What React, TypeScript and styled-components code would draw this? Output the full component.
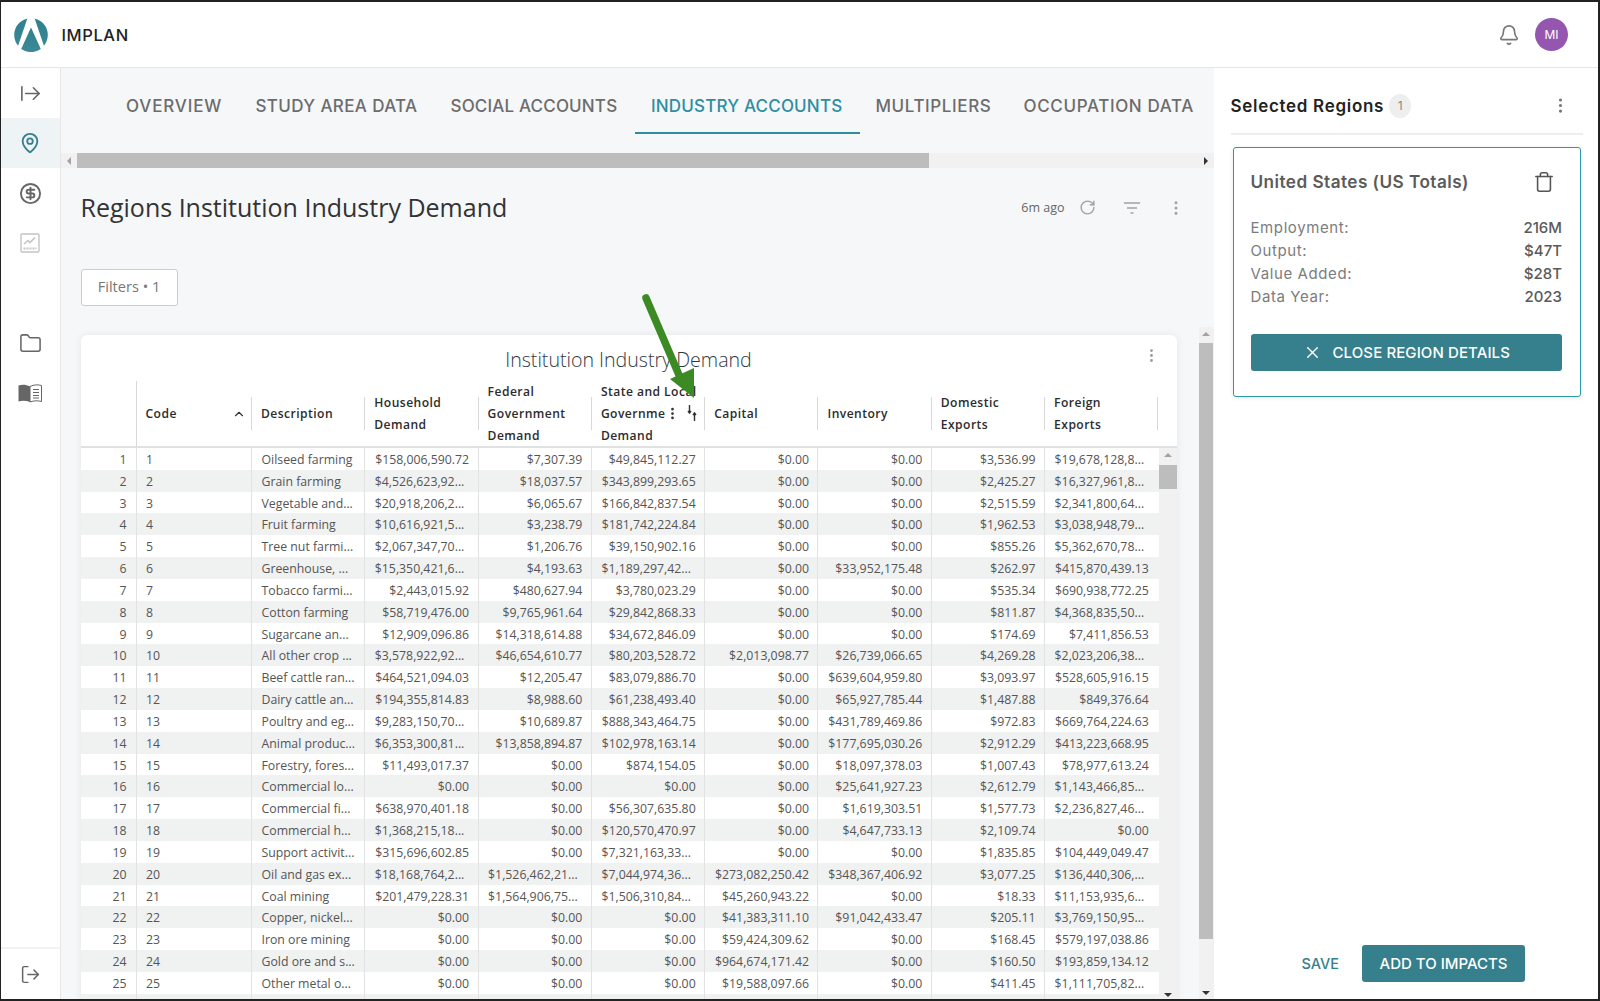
import React from "react";
import styled, { createGlobalStyle } from "styled-components";
import { Bell, EllipsisVertical, MapPin, CircleDollarSign, Folder, RotateCw, Trash, X, ChevronUp, ArrowRightFromLine, LogOut } from "lucide-react";

const heading = `Inter, "Liberation Sans", sans-serif`;
const body = `"Open Sans", "Liberation Sans", sans-serif`;
const teal = "#367f8c";

const GlobalStyle = createGlobalStyle`
  html, body { margin: 0; padding: 0; background: #fff; }
  * { box-sizing: border-box; }
`;

const Frame = styled.div`
  position: relative;
  width: 1600px;
  height: 1001px;
  overflow: hidden;
  border: solid #222;
  border-width: 2px 2px 2px 1.5px;
  display: grid;
  grid-template-rows: 66px 1fr;
  font-family: ${body};
`;

const TopBar = styled.header`
  display: flex;
  align-items: center;
  padding: 0 30px 0 12.5px;
  background: #fff;
  border-bottom: 1px solid #e6e6e6;
`;

const Brand = styled.div`
  font: 500 16.5px ${heading};
  letter-spacing: 0.6px;
  color: #222;
  margin-left: 14px;
  flex: 1;
`;

const Avatar = styled.div`
  width: 33px;
  height: 33px;
  border-radius: 50%;
  background: #9556b0;
  color: #fff;
  font: 400 12px ${heading};
  display: flex;
  align-items: center;
  justify-content: center;
  margin-left: 15px;
`;

const Body = styled.div`
  display: grid;
  grid-template-columns: 59.5px 1153px 1fr;
  min-height: 0;
`;

const SideBar = styled.nav`
  display: flex;
  flex-direction: column;
  background: #fff;
  border-right: 1px solid #e6e6e6;
`;

const SideItem = styled.div<{ $active?: boolean; $muted?: boolean }>`
  height: 50px;
  display: flex;
  align-items: center;
  justify-content: center;
  background: ${(p) => (p.$active ? "#eef3f6" : "transparent")};
  color: ${(p) => (p.$active ? teal : p.$muted ? "#c4c4c4" : "#666")};
`;

const SideGap = styled.div<{ $h?: number }>`
  ${(p) => (p.$h ? `height: ${p.$h}px;` : "flex: 1;")}
`;

const SideFoot = styled(SideItem)`
  height: 52px;
  border-top: 2px solid #f2f2f2;
`;

const Main = styled.main`
  display: flex;
  flex-direction: column;
  background: #f6f7f9;
  min-height: 0;
  min-width: 0;
`;

const Tabs = styled.div`
  height: 85px;
  display: flex;
  padding-left: 49.5px;
`;

const Tab = styled.div<{ $active?: boolean; $w: number; $ls: number }>`
  width: ${(p) => p.$w}px;
  flex: none;
  height: 66px;
  padding: 12px 0 0 16px;
  display: flex;
  align-items: center;
  white-space: nowrap;
  font: 500 17px ${heading};
  letter-spacing: ${(p) => p.$ls}px;
  color: ${(p) => (p.$active ? "#2d8ea0" : "#6c6c6c")};
  border-bottom: 2px solid ${(p) => (p.$active ? "#2d8ea0" : "transparent")};
`;

const HScroll = styled.div`
  flex: none;
  height: 15px;
  display: flex;
  align-items: center;
  background: #f1f1f1;
  padding: 0 6px;
`;

const HThumb = styled.div`
  height: 15px;
  width: 852px;
  margin-left: 6px;
  background: #bdbdbd;
  flex: none;
`;

const Arrow = styled.i<{ $dir: "left" | "right" | "up" | "down"; $dark?: boolean }>`
  display: block;
  width: 0;
  height: 0;
  flex: none;
  border: 4px solid transparent;
  ${(p) => {
    const c = p.$dark ? "#333" : "#a3a3a3";
    if (p.$dir === "left") return `border-right-color: ${c}; border-left-width: 0;`;
    if (p.$dir === "right") return `border-left-color: ${c}; border-right-width: 0; margin-left: auto;`;
    if (p.$dir === "up") return `border-bottom-color: ${c}; border-top-width: 0;`;
    return `border-top-color: ${c}; border-bottom-width: 0; margin-top: auto;`;
  }}
`;

const ContentRow = styled.div`
  flex: 1;
  display: grid;
  grid-template-columns: 1fr 15px;
  min-height: 0;
`;

const Content = styled.div`
  padding: 0 13px 0 20px;
  min-width: 0;
  overflow: hidden;
`;

const TitleRow = styled.div`
  height: 79px;
  display: flex;
  align-items: center;
`;

const PageTitle = styled.h1`
  flex: 1;
  margin: 0 0 1px;
  font: 400 25px ${body};
  color: #333;
`;

const Ago = styled.span`
  font-size: 12.5px;
  color: #666;
  margin-right: 13px;
`;

const ToolIcon = styled.span<{ $w: number }>`
  width: ${(p) => p.$w}px;
  display: flex;
  justify-content: center;
  color: #a2a2a2;
`;

const FilterButton = styled.button`
  display: block;
  width: 97px;
  height: 37px;
  margin-top: 22px;
  padding: 0 0 3px;
  background: #fff;
  border: 1px solid #ccc;
  border-radius: 3px;
  font: 400 14.6px ${body};
  color: #777;
`;

const Card = styled.section`
  margin-top: 29px;
  width: 1096px;
  background: #fff;
  border-radius: 6px 6px 0 0;
  box-shadow: 0 0 8px rgba(0, 0, 0, 0.07);
  display: flex;
  flex-direction: column;
`;

const CardHead = styled.div`
  position: relative;
  height: 46px;
  display: flex;
  justify-content: center;
  font: 300 19.6px ${body};
  color: #2f3a45;
  line-height: 50px;
`;

const CardDots = styled.span`
  position: absolute;
  right: 17px;
  top: 12px;
  color: #999;
  display: flex;
`;

const GridColumns = `55px 115.5px repeat(8, 113.3px)`;

const HeadRow = styled.div`
  display: grid;
  grid-template-columns: ${GridColumns};
  width: 1078px;
  height: 66px;
`;

const BottomRule = styled.div`
  height: 2px;
  margin-top: -1px;
  background: #dfe1e3;
`;

const HeadCell = styled.div<{ $tall?: boolean; $end?: boolean }>`
  position: relative;
  display: flex;
  align-items: center;
  padding-left: 10px;
  font: 600 12.1px/22px ${body};
  letter-spacing: 0.45px;
  color: #2c2c2c;
  &::before {
    content: "";
    position: absolute;
    left: 0;
    top: ${(p) => (p.$tall ? "0" : "16px")};
    bottom: ${(p) => (p.$tall ? "0" : "17px")};
    width: 1px;
    background: #d9d9d9;
  }
  ${(p) =>
    p.$end &&
    `&::after {
      content: "";
      position: absolute;
      right: -1px;
      top: 16px;
      bottom: 17px;
      width: 1px;
      background: #d9d9d9;
    }`}
`;

const SortMark = styled.span`
  position: absolute;
  right: 5px;
  top: 26px;
  color: #333;
  display: flex;
`;

const MenuMark = styled.span`
  position: absolute;
  top: 25px;
  left: 74px;
  color: #333;
  display: flex;
`;

const SwapMark = styled.svg`
  position: absolute;
  top: 24px;
  left: 96px;
`;

const TableBody = styled.div`
  display: grid;
  grid-template-columns: 1078px 18px;
`;

const Row = styled.div<{ $odd: boolean }>`
  display: grid;
  grid-template-columns: ${GridColumns};
  height: 21.83px;
  background: ${(p) => (p.$odd ? "#f0f1f1" : "#fff")};
`;

const Cell = styled.div<{ $align?: "left" | "right"; $index?: boolean }>`
  padding: 0 8.5px 0 9.5px;
  font-size: 12.3px;
  line-height: 23px;
  color: #555;
  white-space: nowrap;
  overflow: hidden;
  text-align: ${(p) => p.$align ?? "left"};
  border-left: ${(p) => (p.$index ? "0" : "1px solid #e2e2e2")};
  ${(p) => p.$index && "padding: 0 9px 0 0;"}
`;

const InnerScroll = styled.div`
  display: flex;
  flex-direction: column;
  align-items: center;
  background: #f1f1f1;
  padding: 5px 0 3px;
  height: 552px;
`;

const InnerThumb = styled.div`
  width: 100%;
  height: 24px;
  margin-top: 8px;
  background: #bdbdbd;
`;

const VTrack = styled.div`
  display: flex;
  flex-direction: column;
  align-items: center;
  background: #f1f1f1;
  margin-top: 159px;
  padding: 5px 0 4px;
`;

const VThumb = styled.div`
  width: 14px;
  height: 596px;
  margin-top: 7px;
  background: #bdbdbd;
`;

const Panel = styled.aside`
  display: flex;
  flex-direction: column;
  background: #fff;
  padding: 0 15px 0 17px;
  min-height: 0;
`;

const PanelHead = styled.div`
  height: 67px;
  display: flex;
  align-items: center;
  border-bottom: 2px solid #eee;
  padding: 10px 13px 0 0;
`;

const PanelTitle = styled.h2`
  margin: 0;
  font: 600 17px ${heading};
  color: #222;
  letter-spacing: 0.7px;
`;

const CountBadge = styled.span`
  width: 22px;
  height: 24px;
  border-radius: 50%;
  background: #eee;
  color: #888;
  font: 400 12px ${heading};
  display: flex;
  align-items: center;
  justify-content: center;
  margin: 0 auto 0 5px;
`;

const RegionCard = styled.div`
  margin: 12px 2px 0;
  height: 250px;
  border: 1.5px solid #2c98a8;
  border-radius: 3px;
  box-shadow: 0 1px 4px rgba(0, 0, 0, 0.1);
  padding: 0 18px 0 17px;
`;

const RegionHead = styled.div`
  height: 67px;
  display: flex;
  align-items: center;
  justify-content: space-between;
  padding: 0 7px 0 0;
  margin-bottom: 1px;
  font: 600 17.2px ${heading};
  letter-spacing: 0.45px;
  color: #5b5b5b;
`;

const Stat = styled.div`
  display: flex;
  justify-content: space-between;
  height: 23px;
  align-items: center;
  font: 400 15px ${heading};
  letter-spacing: 0.6px;
  color: #7c7c7c;
  & > b {
    font-weight: 500;
    letter-spacing: 0;
    color: #5a5a5a;
  }
`;

const CloseButton = styled.button`
  width: 100%;
  height: 37px;
  margin-top: 25.5px;
  display: flex;
  align-items: center;
  justify-content: center;
  gap: 11px;
  background: ${teal};
  border: 0;
  border-radius: 3px;
  color: #fff;
  font: 500 15px ${heading};
  letter-spacing: 0.1px;
`;

const PanelFoot = styled.div`
  margin-top: auto;
  margin-bottom: 17px;
  display: flex;
  align-items: center;
  justify-content: flex-end;
  padding-right: 58px;
`;

const SaveLink = styled.span`
  font: 500 14.5px ${heading};
  color: ${teal};
  margin-right: 23px;
`;

const AddButton = styled.button`
  width: 163px;
  height: 37px;
  background: ${teal};
  border: 0;
  border-radius: 3px;
  color: #fff;
  font: 500 15px ${heading};
`;

const Pointer = styled.svg`
  position: absolute;
  left: 0;
  top: 0;
  pointer-events: none;
`;

// trailing "..." means the grid clipped the value, those sit left aligned
const rows: string[][] = [
  ["1", "Oilseed farming", "$158,006,590.72", "$7,307.39", "$49,845,112.27", "$0.00", "$0.00", "$3,536.99", "$19,678,128,8..."],
  ["2", "Grain farming", "$4,526,623,92...", "$18,037.57", "$343,899,293.65", "$0.00", "$0.00", "$2,425.27", "$16,327,961,8..."],
  ["3", "Vegetable and...", "$20,918,206,2...", "$6,065.67", "$166,842,837.54", "$0.00", "$0.00", "$2,515.59", "$2,341,800,64..."],
  ["4", "Fruit farming", "$10,616,921,5...", "$3,238.79", "$181,742,224.84", "$0.00", "$0.00", "$1,962.53", "$3,038,948,79..."],
  ["5", "Tree nut farmi...", "$2,067,347,70...", "$1,206.76", "$39,150,902.16", "$0.00", "$0.00", "$855.26", "$5,362,670,78..."],
  ["6", "Greenhouse, ...", "$15,350,421,6...", "$4,193.63", "$1,189,297,42...", "$0.00", "$33,952,175.48", "$262.97", "$415,870,439.13"],
  ["7", "Tobacco farmi...", "$2,443,015.92", "$480,627.94", "$3,780,023.29", "$0.00", "$0.00", "$535.34", "$690,938,772.25"],
  ["8", "Cotton farming", "$58,719,476.00", "$9,765,961.64", "$29,842,868.33", "$0.00", "$0.00", "$811.87", "$4,368,835,50..."],
  ["9", "Sugarcane an...", "$12,909,096.86", "$14,318,614.88", "$34,672,846.09", "$0.00", "$0.00", "$174.69", "$7,411,856.53"],
  ["10", "All other crop ...", "$3,578,922,92...", "$46,654,610.77", "$80,203,528.72", "$2,013,098.77", "$26,739,066.65", "$4,269.28", "$2,023,206,38..."],
  ["11", "Beef cattle ran...", "$464,521,094.03", "$12,205.47", "$83,079,886.70", "$0.00", "$639,604,959.80", "$3,093.97", "$528,605,916.15"],
  ["12", "Dairy cattle an...", "$194,355,814.83", "$8,988.60", "$61,238,493.40", "$0.00", "$65,927,785.44", "$1,487.88", "$849,376.64"],
  ["13", "Poultry and eg...", "$9,283,150,70...", "$10,689.87", "$888,343,464.75", "$0.00", "$431,789,469.86", "$972.83", "$669,764,224.63"],
  ["14", "Animal produc...", "$6,353,300,81...", "$13,858,894.87", "$102,978,163.14", "$0.00", "$177,695,030.26", "$2,912.29", "$413,223,668.95"],
  ["15", "Forestry, fores...", "$11,493,017.37", "$0.00", "$874,154.05", "$0.00", "$18,097,378.03", "$1,007.43", "$78,977,613.24"],
  ["16", "Commercial lo...", "$0.00", "$0.00", "$0.00", "$0.00", "$25,641,927.23", "$2,612.79", "$1,143,466,85..."],
  ["17", "Commercial fi...", "$638,970,401.18", "$0.00", "$56,307,635.80", "$0.00", "$1,619,303.51", "$1,577.73", "$2,236,827,46..."],
  ["18", "Commercial h...", "$1,368,215,18...", "$0.00", "$120,570,470.97", "$0.00", "$4,647,733.13", "$2,109.74", "$0.00"],
  ["19", "Support activit...", "$315,696,602.85", "$0.00", "$7,321,163,33...", "$0.00", "$0.00", "$1,835.85", "$104,449,049.47"],
  ["20", "Oil and gas ex...", "$18,168,764,2...", "$1,526,462,21...", "$7,044,974,36...", "$273,082,250.42", "$348,367,406.92", "$3,077.25", "$136,440,306,..."],
  ["21", "Coal mining", "$201,479,228.31", "$1,564,906,75...", "$1,506,310,84...", "$45,260,943.22", "$0.00", "$18.33", "$11,153,935,6..."],
  ["22", "Copper, nickel...", "$0.00", "$0.00", "$0.00", "$41,383,311.10", "$91,042,433.47", "$205.11", "$3,769,150,95..."],
  ["23", "Iron ore mining", "$0.00", "$0.00", "$0.00", "$59,424,309.62", "$0.00", "$168.45", "$579,197,038.86"],
  ["24", "Gold ore and s...", "$0.00", "$0.00", "$0.00", "$964,674,171.42", "$0.00", "$160.50", "$193,859,134.12"],
  ["25", "Other metal o...", "$0.00", "$0.00", "$0.00", "$19,588,097.66", "$0.00", "$411.45", "$1,111,705,82..."],
  ["", "", "", "", "", "", "", "", ""],
];

const stats = [
  ["Employment:", "216M"],
  ["Output:", "$47T"],
  ["Value Added:", "$28T"],
  ["Data Year:", "2023"],
];

const tabs = [
  { label: "OVERVIEW", width: 129.5, spacing: 0.85 },
  { label: "STUDY AREA DATA", width: 195, spacing: 0.37 },
  { label: "SOCIAL ACCOUNTS", width: 200.5, spacing: 0.17 },
  { label: "INDUSTRY ACCOUNTS", width: 224.5, spacing: 0.18 },
  { label: "MULTIPLIERS", width: 148, spacing: 0.6 },
  { label: "OCCUPATION DATA", width: 202, spacing: 0.65 },
];

function Logo() {
  return (
    <svg width="34" height="34" viewBox="0 0 34 34">
      <defs>
        <linearGradient id="logoFill" x1="0" y1="0" x2="0" y2="1">
          <stop offset="0" stopColor="#2f7f8e" />
          <stop offset="1" stopColor="#3d8a98" />
        </linearGradient>
      </defs>
      <circle cx="17" cy="17" r="16.8" fill="url(#logoFill)" />
      <path d="M13.5 0 L20.5 0 L31 31 L36 36 L-2 36 L3 31 Z" fill="#fff" />
      <path d="M17 9.5 L26.8 31 A17 17 0 0 1 7.2 31 Z" fill="url(#logoFill)" />
    </svg>
  );
}

function ChartIcon() {
  return (
    <svg width="20" height="20" viewBox="0 0 20 20" fill="none" stroke="currentColor">
      <rect x="1" y="1" width="18" height="18" rx="1" strokeWidth="1.4" />
      <path d="M4 11 L8 7.5 L10 9.5 L15 4.5" strokeWidth="1.6" />
      <path d="M3.5 15.5 h13" strokeWidth="2" strokeDasharray="2 1" />
    </svg>
  );
}

function BookIcon() {
  return (
    <svg width="24" height="19" viewBox="0 0 24 19" fill="none">
      <path d="M0.5 1.5 C4 0.5 8 0.5 12 2.5 V18 C8 16.5 4 16.5 0.5 17.5 Z" fill="#666" />
      <path d="M12 2.5 C16 0.5 20 0.5 23.5 1.5 V17.5 C20 16.5 16 16.5 12 18 Z" stroke="#666" />
      <path d="M15 5.5 h6 M15 8.5 h6 M15 11.5 h6 M15 14 h6" stroke="#666" />
    </svg>
  );
}

function App() {
  return (
    <>
      <GlobalStyle />
      <Frame>
        <TopBar>
          <Logo />
          <Brand>IMPLAN</Brand>
          <Bell size={22} color="#777" strokeWidth={1.8} />
          <Avatar>MI</Avatar>
        </TopBar>
        <Body>
          <SideBar>
            <SideItem>
              <ArrowRightFromLine size={23} strokeWidth={1.7} />
            </SideItem>
            <SideItem $active>
              <MapPin size={22} strokeWidth={2} />
            </SideItem>
            <SideItem>
              <CircleDollarSign size={23} strokeWidth={2} />
            </SideItem>
            <SideItem $muted>
              <ChartIcon />
            </SideItem>
            <SideGap $h={50} />
            <SideItem>
              <Folder size={23} strokeWidth={1.6} />
            </SideItem>
            <SideItem>
              <BookIcon />
            </SideItem>
            <SideGap />
            <SideFoot>
              <LogOut size={21} strokeWidth={1.7} />
            </SideFoot>
          </SideBar>
          <Main>
            <Tabs>
              {tabs.map((t) => (
                <Tab key={t.label} $w={t.width} $ls={t.spacing} $active={t.label === "INDUSTRY ACCOUNTS"}>
                  {t.label}
                </Tab>
              ))}
            </Tabs>
            <HScroll>
              <Arrow $dir="left" />
              <HThumb />
              <Arrow $dir="right" $dark />
            </HScroll>
            <ContentRow>
              <Content>
                <TitleRow>
                  <PageTitle>Regions Institution Industry Demand</PageTitle>
                  <Ago>6m ago</Ago>
                  <ToolIcon $w={20}>
                    <RotateCw size={17} />
                  </ToolIcon>
                  <ToolIcon $w={68}>
                    <svg width="18" height="14" viewBox="0 0 18 14" stroke="currentColor" strokeWidth="1.6">
                      <path d="M1 2 h16 M4 7 h10 M7.5 12 h3" />
                    </svg>
                  </ToolIcon>
                  <ToolIcon $w={20}>
                    <EllipsisVertical size={18} />
                  </ToolIcon>
                </TitleRow>
                <FilterButton>Filters • 1</FilterButton>
                <Card>
                  <CardHead>
                    Institution Industry Demand
                    <CardDots>
                      <EllipsisVertical size={17} />
                    </CardDots>
                  </CardHead>
                  <HeadRow>
                    <div />
                    <HeadCell $tall>
                      Code
                      <SortMark>
                        <ChevronUp size={14} strokeWidth={2} />
                      </SortMark>
                    </HeadCell>
                    <HeadCell>Description</HeadCell>
                    <HeadCell>
                      <span>
                        Household
                        <br />
                        Demand
                      </span>
                    </HeadCell>
                    <HeadCell>
                      <span>
                        Federal
                        <br />
                        Government
                        <br />
                        Demand
                      </span>
                    </HeadCell>
                    <HeadCell>
                      <span>
                        State and Local
                        <br />
                        Governme
                        <br />
                        Demand
                      </span>
                      <MenuMark>
                        <EllipsisVertical size={15} strokeWidth={2.4} />
                      </MenuMark>
                      <SwapMark width="10" height="16" viewBox="0 0 10 16" fill="none" stroke="#333" strokeWidth="1.4">
                        <path d="M2.5 0 v8 M1 6 l1.5 2 l1.5 -2 M7.5 16 v-8 M6 10 l1.5 -2 l1.5 2" />
                      </SwapMark>
                    </HeadCell>
                    <HeadCell>Capital</HeadCell>
                    <HeadCell>Inventory</HeadCell>
                    <HeadCell>
                      <span>
                        Domestic
                        <br />
                        Exports
                      </span>
                    </HeadCell>
                    <HeadCell $end>
                      <span>
                        Foreign
                        <br />
                        Exports
                      </span>
                    </HeadCell>
                  </HeadRow>
                  <BottomRule />
                  <TableBody>
                    <div>
                      {rows.map((r, i) => (
                        <Row key={i} $odd={i % 2 === 1}>
                          <Cell $index $align="right">
                            {r[0]}
                          </Cell>
                          {r.map((v, j) => (
                            <Cell key={j} $align={j < 2 || v.endsWith("...") ? "left" : "right"}>
                              {v}
                            </Cell>
                          ))}
                        </Row>
                      ))}
                    </div>
                    <InnerScroll>
                      <Arrow $dir="up" />
                      <InnerThumb />
                      <Arrow $dir="down" $dark />
                    </InnerScroll>
                  </TableBody>
                </Card>
              </Content>
              <VTrack>
                <Arrow $dir="up" />
                <VThumb />
                <Arrow $dir="down" $dark />
              </VTrack>
            </ContentRow>
          </Main>
          <Panel>
            <PanelHead>
              <PanelTitle>Selected Regions</PanelTitle>
              <CountBadge>1</CountBadge>
              <EllipsisVertical size={19} color="#777" />
            </PanelHead>
            <RegionCard>
              <RegionHead>
                United States (US Totals)
                <Trash size={22} strokeWidth={1.7} color="#555" />
              </RegionHead>
              {stats.map(([label, value]) => (
                <Stat key={label}>
                  {label}
                  <b>{value}</b>
                </Stat>
              ))}
              <CloseButton>
                <X size={19} strokeWidth={1.8} />
                CLOSE REGION DETAILS
              </CloseButton>
            </RegionCard>
            <PanelFoot>
              <SaveLink>SAVE</SaveLink>
              <AddButton>ADD TO IMPACTS</AddButton>
            </PanelFoot>
          </Panel>
        </Body>
        <Pointer width="1600" height="1001" viewBox="0 0 1600 1001">
          <path d="M645 296 L681 380" stroke="#3c8a24" strokeWidth="7.5" strokeLinecap="round" />
          <path d="M669 377 L693 366 L693 396 Z" fill="#3c8a24" />
        </Pointer>
      </Frame>
    </>
  );
}

export default App;
